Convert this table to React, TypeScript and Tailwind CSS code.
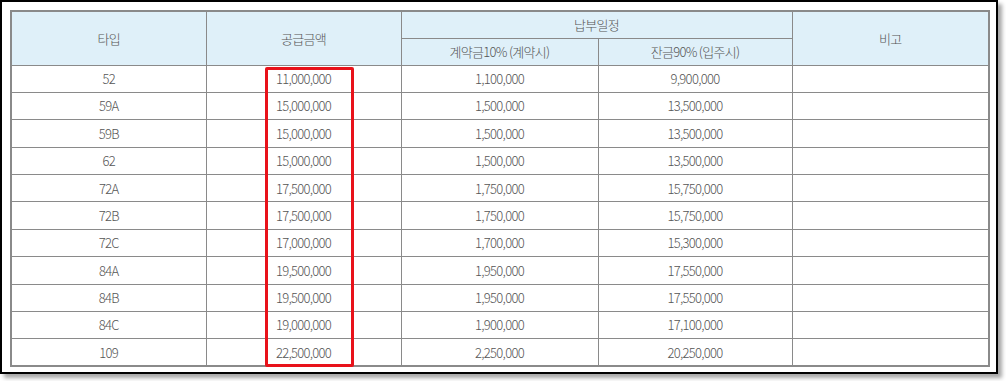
import React from "react";

const rows = [
  ["52", "11,000,000", "1,100,000", "9,900,000"],
  ["59A", "15,000,000", "1,500,000", "13,500,000"],
  ["59B", "15,000,000", "1,500,000", "13,500,000"],
  ["62", "15,000,000", "1,500,000", "13,500,000"],
  ["72A", "17,500,000", "1,750,000", "15,750,000"],
  ["72B", "17,500,000", "1,750,000", "15,750,000"],
  ["72C", "17,000,000", "1,700,000", "15,300,000"],
  ["84A", "19,500,000", "1,950,000", "17,550,000"],
  ["84B", "19,500,000", "1,950,000", "17,550,000"],
  ["84C", "19,000,000", "1,900,000", "17,100,000"],
  ["109", "22,500,000", "2,250,000", "20,250,000"],
];

const cell = "border border-[#8a8a8a] text-center align-middle p-0";

const App: React.FC = () => {
  return (
    <div
      className="w-[1006px] h-[381px] bg-white overflow-hidden"
      style={{ fontFamily: '"Noto Sans CJK KR", "Liberation Sans", sans-serif' }}
    >
      <div className="relative w-[998px] h-[374px] border-2 border-black bg-white shadow-[4px_4px_4px_rgba(0,0,0,0.35)] pt-[8px] pl-[8px]">
        <table className="border-collapse border-2 border-[#8a8a8a] table-fixed w-[978px] text-[13px] text-[#555] tracking-[-0.7px] font-light">
          <colgroup>
            <col className="w-[195px]" />
            <col className="w-[195px]" />
            <col className="w-[197px]" />
            <col className="w-[194px]" />
            <col className="w-[197px]" />
          </colgroup>
          <thead>
            <tr className="h-[27px] bg-[#dff0f9]">
              <th rowSpan={2} className={`${cell} font-light`}>타입</th>
              <th rowSpan={2} className={`${cell} font-light`}>공급금액</th>
              <th colSpan={2} className={`${cell} font-light`}>납부일정</th>
              <th rowSpan={2} className={`${cell} font-light`}>비고</th>
            </tr>
            <tr className="h-[27px] bg-[#dff0f9]">
              <th className={`${cell} font-light`}>계약금10% (계약시)</th>
              <th className={`${cell} font-light`}>잔금90% (입주시)</th>
            </tr>
          </thead>
          <tbody>
            {rows.map((r) => (
              <tr key={r[0]} className="h-[27.4px]">
                <td className={cell}>{r[0]}</td>
                <td className={cell}>{r[1]}</td>
                <td className={cell}>{r[2]}</td>
                <td className={cell}>{r[3]}</td>
                <td className={cell}></td>
              </tr>
            ))}
          </tbody>
        </table>
        {/* red highlight over supply price column */}
        <div className="absolute left-[263px] top-[65px] w-[89px] h-[300px] border-[3px] border-[#e8121a] rounded-[2px]" />
      </div>
    </div>
  );
};

export default App;
